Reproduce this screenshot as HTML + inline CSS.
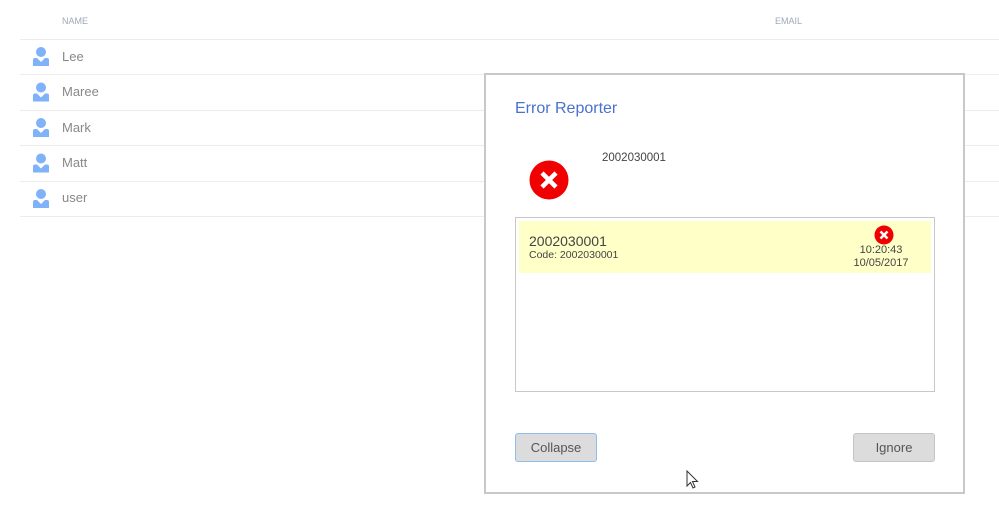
<!DOCTYPE html>
<html><head><style>
body{margin:0;width:999px;height:521px;background:#fff;font-family:"Liberation Sans",sans-serif;position:relative;overflow:hidden}
.a{position:absolute}
.hd{font-size:9px;color:#a0a8b8;top:16px}
.line{left:20px;width:979px;height:1px;background:#ececec}
.nm{left:62px;font-size:13px;color:#888}
.btn{position:absolute;top:433px;height:29px;width:82px;background:#dcdcdc;border:1px solid #c4c4c4;border-radius:3px;font-size:13px;color:#555;text-align:center;line-height:27px;box-sizing:border-box}
</style></head><body>
<div class="a hd" style="left:62px">NAME</div>
<div class="a hd" style="left:775px">EMAIL</div>
<div class="a line" style="top:39px"></div>
<div class="a line" style="top:74px"></div>
<div class="a line" style="top:110px"></div>
<div class="a line" style="top:145px"></div>
<div class="a line" style="top:181px"></div>
<div class="a line" style="top:216px"></div>
<svg class="a" style="left:0;top:0" width="60" height="220">
<g fill="#7fb2f8">
<g transform="translate(0,0)"><circle cx="41" cy="52" r="5"/><path d="M33 66v-6q0-2 2-2h2l4 4 4-4h2q2 0 2 2v6z"/></g>
<g transform="translate(0,35.5)"><circle cx="41" cy="52" r="5"/><path d="M33 66v-6q0-2 2-2h2l4 4 4-4h2q2 0 2 2v6z"/></g>
<g transform="translate(0,71)"><circle cx="41" cy="52" r="5"/><path d="M33 66v-6q0-2 2-2h2l4 4 4-4h2q2 0 2 2v6z"/></g>
<g transform="translate(0,106.5)"><circle cx="41" cy="52" r="5"/><path d="M33 66v-6q0-2 2-2h2l4 4 4-4h2q2 0 2 2v6z"/></g>
<g transform="translate(0,142)"><circle cx="41" cy="52" r="5"/><path d="M33 66v-6q0-2 2-2h2l4 4 4-4h2q2 0 2 2v6z"/></g>
</g></svg>
<div class="a nm" style="top:49px">Lee</div>
<div class="a nm" style="top:84px">Maree</div>
<div class="a nm" style="top:120px">Mark</div>
<div class="a nm" style="top:155px">Matt</div>
<div class="a nm" style="top:190px">user</div>

<div class="a" style="left:484px;top:73px;width:477px;height:417px;border:2px solid #c8c8c8;background:#fff"></div>
<div class="a" style="left:515px;top:100px;font-size:16px;color:#4a70d0">Error Reporter</div>
<svg class="a" style="left:529px;top:160px" width="40" height="40"><circle cx="20" cy="20" r="19.5" fill="#f00000"/><path d="M13 13L27 27M27 13L13 27" stroke="#fff" stroke-width="4.5"/></svg>
<div class="a" style="left:602px;top:152px;font-size:11.5px;color:#444">2002030001</div>
<div class="a" style="left:515px;top:217px;width:418px;height:173px;border:1px solid #c8c8c8"></div>
<div class="a" style="left:519px;top:221px;width:412px;height:52px;background:#ffffc8"></div>
<div class="a" style="left:529px;top:233px;font-size:14px;color:#444">2002030001</div>
<div class="a" style="left:529px;top:249px;font-size:10.5px;color:#444">Code: 2002030001</div>
<svg class="a" style="left:874px;top:225px" width="20" height="20"><circle cx="10" cy="10" r="9.5" fill="#f00000"/><path d="M6.5 6.5L13.5 13.5M13.5 6.5L6.5 13.5" stroke="#fff" stroke-width="2.5"/></svg>
<div class="a" style="left:836px;top:244px;width:90px;text-align:center;font-size:11px;color:#444;line-height:12.5px">10:20:43<br>10/05/2017</div>
<div class="btn" style="left:515px;border-color:#8cbcf0">Collapse</div>
<div class="btn" style="left:853px">Ignore</div>
<svg class="a" style="left:686px;top:470px" width="14" height="20"><path d="M1 1v15l3.5-3.5 2.5 5.5 2-1-2.5-5.5h5z" fill="#fff" stroke="#333" stroke-width="1"/></svg>
</body></html>
